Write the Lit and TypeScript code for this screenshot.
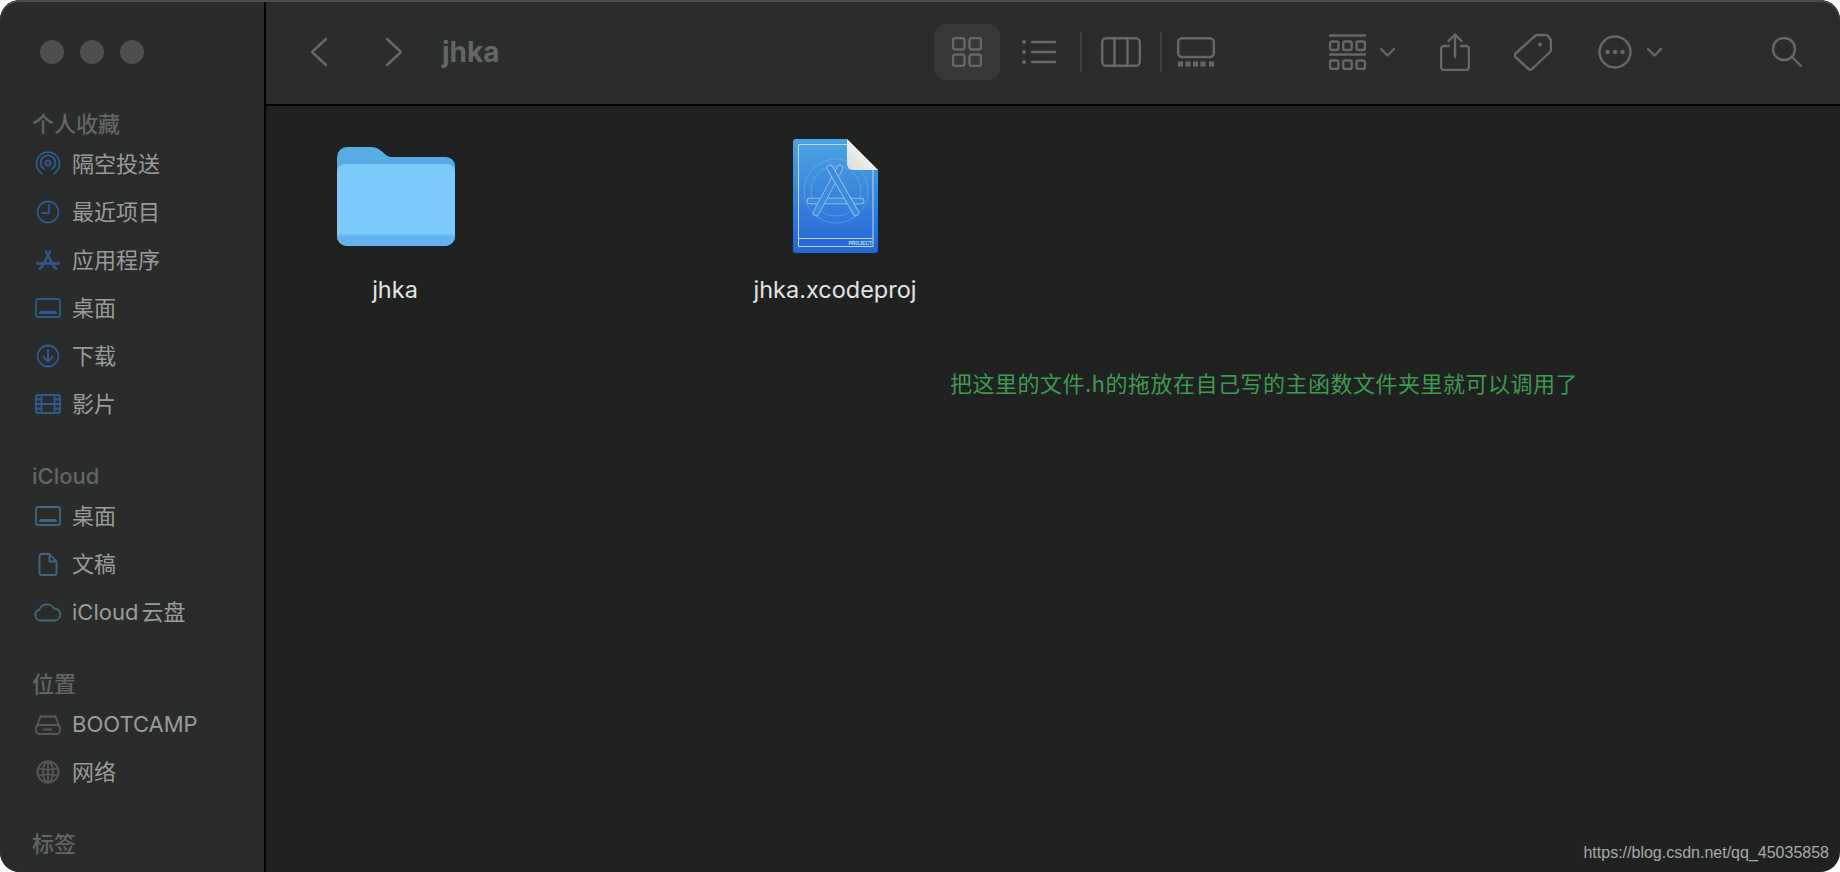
import { LitElement, html, css, svg } from "lit";
import { customElement } from "lit/decorators.js";

const blue = "#2d5a8f";
const teal = "#40687d";
const gray = "#565958";

const icons: Record<string, any> = {
  airdrop: svg`<path d="M8 23.500a11.500 11.500 0 1 1 12 0" /><path d="M10 19a7.400 7.400 0 1 1 8 0"/><circle cx="14" cy="13" r="2.600"/>`,
  clock: svg`<circle cx="14" cy="14" r="10.500"/><path d="M15 7v8H8"/>`,
  apps: svg`<path d="M12 5.500l8 15.500M16 5.500L8 21M3 17.500h22" stroke-width="2.400"/><path d="M6 23l.8-1.500M22 23l-.8-1.500" stroke-width="2.400"/>`,
  desktop: svg`<rect x="2" y="5" width="24" height="18" rx="2"/><path d="M6.500 18.500h15" stroke-width="3"/>`,
  download: svg`<circle cx="14" cy="14" r="10.500"/><path d="M14 8v11M9.500 15l4.500 4.500 4.500-4.500"/>`,
  film: svg`<rect x="2" y="5" width="24" height="18" rx="2"/><path d="M7.500 5v18M20.500 5v18M7.500 14h13M2 9.500h5.500M2 14h5.500M2 18.500h5.500M20.500 9.500H26M20.500 14H26M20.500 18.500H26"/>`,
  doc: svg`<path d="M5.500 6a2 2 0 0 1 2-2h8l7 7.500V23a2 2 0 0 1-2 2h-13a2 2 0 0 1-2-2zM15.500 4v7.500h7"/>`,
  cloud: svg`<path d="M7.500 22.500a5.500 5.500 0 0 1-1-10.800A8 8 0 0 1 21 10.500a6 6 0 0 1 .5 12z" transform="translate(-1)"/>`,
  drive: svg`<path d="M2 18l4.500-11.500h15L26 18"/><rect x="2" y="15" width="24" height="9" rx="3.500"/><path d="M10 19.500h8" stroke-dasharray="1 1" stroke-width="2"/>`,
  globe: svg`<circle cx="14" cy="14" r="10.500"/><ellipse cx="14" cy="14" rx="5" ry="10.500"/><path d="M14 3.500v21M4 10c6 2 14 2 20 0M4 18c6-2 14-2 20 0"/>`,
};

interface Row { icon: string; label: string; color: string }
interface Section { title: string; rows: Row[] }

const sections: Section[] = [
  {
    title: "个人收藏",
    rows: [
      { icon: "airdrop", label: "隔空投送", color: blue },
      { icon: "clock", label: "最近项目", color: blue },
      { icon: "apps", label: "应用程序", color: blue },
      { icon: "desktop", label: "桌面", color: blue },
      { icon: "download", label: "下载", color: blue },
      { icon: "film", label: "影片", color: blue },
    ],
  },
  {
    title: "iCloud",
    rows: [
      { icon: "desktop", label: "桌面", color: teal },
      { icon: "doc", label: "文稿", color: teal },
      { icon: "cloud", label: "iCloud 云盘", color: teal },
    ],
  },
  {
    title: "位置",
    rows: [
      { icon: "drive", label: "BOOTCAMP", color: gray },
      { icon: "globe", label: "网络", color: gray },
    ],
  },
  { title: "标签", rows: [] },
];

@customElement("app-root")
export class AppRoot extends LitElement {
  static styles = css`
    :host {
      display: block;
      width: 1840px;
      height: 872px;
      background: #fff;
      font-family: Inter, "Noto Sans CJK SC", sans-serif;
    }
    .window {
      position: relative;
      display: flex;
      width: 1840px;
      height: 872px;
      border-radius: 20px;
      overflow: hidden;
      background: #202221;
    }
    .window::after {
      content: "";
      position: absolute;
      inset: 0;
      border-radius: 20px;
      box-shadow: inset 0 2px 0 #4b4d4c;
      pointer-events: none;
    }
    .sidebar {
      flex: none;
      box-sizing: border-box;
      padding-top: 40px;
      background: #2a2c2b;
      border-right: 2px solid #000;
      width: 266px;
      overflow: hidden;
    }
    .lights {
      display: flex;
      gap: 16px;
      padding-left: 40px;
      margin-bottom: 44px;
    }
    .lights span {
      width: 24px;
      height: 24px;
      border-radius: 50%;
      background: #4e504f;
    }
    .section {
      margin-bottom: 32px;
    }
    .heading {
      height: 32px;
      line-height: 32px;
      padding-left: 32px;
      font-size: 22px;
      font-weight: 500;
      color: #636564;
      white-space: nowrap;
    }
    .row {
      display: flex;
      align-items: center;
      height: 48px;
      padding-left: 34px;
      gap: 10px;
      font-size: 22px;
      line-height: 32px;
      word-spacing: -3px;
      color: #9a9b9b;
      white-space: nowrap;
    }
    .row svg {
      width: 28px;
      height: 28px;
      flex: none;
      fill: none;
      stroke: currentColor;
      stroke-width: 1.8;
      stroke-linecap: round;
      stroke-linejoin: round;
    }
    .main {
      flex: 1;
      min-width: 0;
      display: flex;
      flex-direction: column;
    }
    .toolbar {
      height: 104px;
      flex: none;
      display: flex;
      align-items: center;
      background: #2b2d2c;
      border-bottom: 2px solid #000;
      color: #666867;
      padding-left: 44px;
    }
    .toolbar svg {
      display: block;
      flex: none;
      fill: none;
      stroke: currentColor;
      stroke-width: 2.4;
      stroke-linecap: round;
      stroke-linejoin: round;
    }
    .title {
      font-size: 28px;
      font-weight: 700;
      color: #646665;
      margin-left: 39px;
      width: 60px;
      line-height: 34px;
      flex: none;
    }
    .fwd { margin-left: 57px; }
    .active {
      width: 66px;
      height: 56px;
      margin-left: 432px;
      border-radius: 12px;
      background: #373938;
      display: flex;
      align-items: center;
      justify-content: center;
      flex: none;
    }
    .list { margin-left: 21px; }
    .sep {
      width: 2px;
      height: 40px;
      background: #3f4140;
      flex: none;
    }
    .sep1 { margin-left: 24px; }
    .cols { margin-left: 19px; }
    .sep2 { margin-left: 19px; }
    .gallery { margin-left: 15px; }
    .group { margin-left: 114px; }
    .chev1 { margin-left: 13px; }
    .share { margin-left: 44px; }
    .tag { margin-left: 44px; }
    .more { margin-left: 46px; }
    .chev2 { margin-left: 14px; }
    .search { margin-left: 108px; }
    .files {
      flex: 1;
      display: grid;
      grid-template-columns: 220px 220px;
      column-gap: 220px;
      align-content: start;
      padding-left: 19px;
    }
    .file {
      display: flex;
      flex-direction: column;
      align-items: center;
    }
    .thumb {
      box-sizing: border-box;
      height: 147px;
      display: flex;
      align-items: flex-end;
      justify-content: center;
      width: 100%;
      padding-left: 1px;
    }
    .folder-art {
      margin-bottom: 7px;
      margin-left: 1px;
    }
    .label {
      margin-top: 22px;
      font-size: 23.5px;
      line-height: 30px;
      color: #e4e4e4;
      white-space: nowrap;
    }
    .note {
      position: absolute;
      left: 950px;
      top: 366px;
      font-family: "Noto Sans CJK SC", sans-serif;
      font-size: 22px;
      line-height: 32px;
      letter-spacing: 0.5px;
      color: #3f9a50;
      white-space: nowrap;
    }
    .mark {
      position: absolute;
      right: 11px;
      top: 843px;
      font-family: "Liberation Sans", sans-serif;
      font-size: 16px;
      line-height: 20px;
      color: #a8a9a9;
      white-space: nowrap;
    }
  `;

  private folder() {
    return html`<svg class="folder-art" width="118" height="99" viewBox="0 0 118 99">
      <defs>
        <linearGradient id="fb" x1="0" y1="0" x2="0" y2="1">
          <stop offset="0" stop-color="#5aaee6" />
          <stop offset="1" stop-color="#4a9bd8" />
        </linearGradient>
      </defs>
      <path d="M0 10a10 10 0 0 1 10-10h24c6 0 9 3 12 5.500 3 2.500 5 4.500 9 4.500h54a9 9 0 0 1 9 9v60H0z" fill="url(#fb)" />
      <path d="M0 25a8 8 0 0 1 8-8h102a8 8 0 0 1 8 8v64a10 10 0 0 1-10 10H10A10 10 0 0 1 0 89z" fill="#7ccafc" />
      <path d="M0 87h118v2a10 10 0 0 1-10 10H10A10 10 0 0 1 0 89z" fill="#61b4ee" />
      <path d="M0 88h118" stroke="#7fc6f4" stroke-width="1" />
    </svg>`;
  }

  private project() {
    const leg = "#3d8cdc";
    const edge = "#a6c9ef";
    return html`<svg width="85" height="114" viewBox="0 0 85 114">
      <defs>
        <linearGradient id="pj" x1="0" y1="0" x2="0" y2="1">
          <stop offset="0" stop-color="#4aa5e2" />
          <stop offset="1" stop-color="#2565d6" />
        </linearGradient>
        <linearGradient id="fold" x1="0" y1="1" x2="1" y2="0">
          <stop offset="0" stop-color="#dcdcdc" />
          <stop offset="1" stop-color="#ffffff" />
        </linearGradient>
      </defs>
      <path d="M3 0h51l31 31v80a3 3 0 0 1-3 3H3a3 3 0 0 1-3-3V3a3 3 0 0 1 3-3z" fill="url(#pj)" />
      <g fill="none" stroke="#bcd6f2" stroke-width="1">
        <path d="M54 5.500H5.500V107.500H80V31" />
        <path d="M5.500 99.500H80" />
      </g>
      <g fill="none" stroke="#9cc4ec" stroke-width="0.7" opacity="0.5">
        <circle cx="43" cy="52" r="32" />
        <circle cx="43" cy="52" r="25" />
      </g>
      <g fill="none" stroke-linecap="round">
        <path d="M17 62h51" stroke="${edge}" stroke-width="6.500" />
        <path d="M17 62h51" stroke="${leg}" stroke-width="5" />
        <path d="M47 29L23 74" stroke="${edge}" stroke-width="6.500" />
        <path d="M47 29L23 74" stroke="${leg}" stroke-width="5" />
        <path d="M37 29L63 74" stroke="${edge}" stroke-width="6.500" />
        <path d="M37 29L63 74" stroke="${leg}" stroke-width="5" />
      </g>
      <path d="M54 0l31 31H60a6 6 0 0 1-6-6z" fill="url(#fold)" />
      <text x="79" y="105.500" text-anchor="end" font-family="Liberation Sans, sans-serif" font-size="5" font-weight="700" fill="#bcd6f2">PROJECT</text>
    </svg>`;
  }

  render() {
    return html`
      <div class="window">
        <aside class="sidebar">
          <div class="lights"><span></span><span></span><span></span></div>
          ${sections.map(
            (s) => html`<div class="section">
              <div class="heading">${s.title}</div>
              ${s.rows.map(
                (r) => html`<div class="row">
                  <svg viewBox="0 0 28 28" style="color:${r.color}">${icons[r.icon]}</svg>
                  <span>${r.label}</span>
                </div>`
              )}
            </div>`
          )}
        </aside>
        <main class="main">
          <div class="toolbar">
            <svg width="18" height="30" viewBox="0 0 18 30"><path d="M16 2L2 15l14 13" /></svg>
            <svg class="fwd" width="18" height="30" viewBox="0 0 18 30"><path d="M2 2l14 13L2 28" /></svg>
            <div class="title">jhka</div>
            <div class="active">
              <svg width="30" height="30" viewBox="0 0 30 30" stroke-width="2">
                <rect x="1" y="1" width="11.500" height="11.500" rx="2.500" /><rect x="17.500" y="1" width="11.500" height="11.500" rx="2.500" />
                <rect x="1" y="17.500" width="11.500" height="11.500" rx="2.500" /><rect x="17.500" y="17.500" width="11.500" height="11.500" rx="2.500" />
              </svg>
            </div>
            <svg class="list" width="35" height="24" viewBox="0 0 35 24">
              <circle cx="3" cy="2" r="2" fill="currentColor" stroke="none" /><circle cx="3" cy="12" r="2" fill="currentColor" stroke="none" /><circle cx="3" cy="22" r="2" fill="currentColor" stroke="none" />
              <path d="M11 2h23M11 12h23M11 22h23" />
            </svg>
            <div class="sep sep1"></div>
            <svg class="cols" width="40" height="30" viewBox="0 0 40 30">
              <rect x="1.200" y="1.200" width="37.600" height="27.600" rx="4" /><path d="M13.500 1.200v27.600M26.500 1.200v27.600" />
            </svg>
            <div class="sep sep2"></div>
            <svg class="gallery" width="38" height="30" viewBox="0 0 38 30">
              <rect x="1.200" y="1.200" width="35.600" height="18.800" rx="4" />
              <g fill="currentColor" stroke="none">
                <rect x="1" y="24.500" width="5" height="5" /><rect x="8.500" y="24.500" width="5" height="5" /><rect x="16" y="24.500" width="5" height="5" /><rect x="23.500" y="24.500" width="5" height="5" /><rect x="32" y="24.500" width="5" height="5" />
              </g>
            </svg>
            <svg class="group" width="37" height="36" viewBox="0 0 37 36" stroke-width="2">
              <path d="M1 1.500h35M1 20.500h35" />
              <rect x="1" y="7.500" width="8.500" height="8.500" rx="2" /><rect x="14.200" y="7.500" width="8.500" height="8.500" rx="2" /><rect x="27.500" y="7.500" width="8.500" height="8.500" rx="2" />
              <rect x="1" y="26.500" width="8.500" height="8.500" rx="2" /><rect x="14.200" y="26.500" width="8.500" height="8.500" rx="2" /><rect x="27.500" y="26.500" width="8.500" height="8.500" rx="2" />
            </svg>
            <svg class="chev1" width="17" height="11" viewBox="0 0 17 11" stroke-width="3"><path d="M2 2l6.500 6.500L15 2" /></svg>
            <svg class="share" width="30" height="38" viewBox="0 0 30 38" stroke-width="2.200">
              <path d="M9 13H4a3 3 0 0 0-3 3v18a3 3 0 0 0 3 3h22a3 3 0 0 0 3-3V16a3 3 0 0 0-3-3h-5" />
              <path d="M15 24V1.500M8.500 8L15 1.500 21.500 8" />
            </svg>
            <svg class="tag" width="38" height="38" viewBox="0 0 38 38" stroke-width="2.200">
              <path d="M21 3a3 3 0 0 1 2-1h9a4 4 0 0 1 2 1l2 3a3 3 0 0 1 1 2v9a3 3 0 0 1-1 2L18 36a2.500 2.500 0 0 1-3.500 0L1.500 24a2.500 2.500 0 0 1 0-3.500z" />
              <circle cx="26" cy="11.500" r="2" fill="currentColor" stroke="none" />
            </svg>
            <svg class="more" width="34" height="34" viewBox="0 0 34 34" stroke-width="2.400">
              <circle cx="17" cy="17" r="15.500" />
              <g fill="currentColor" stroke="none"><circle cx="9.500" cy="17" r="2.200" /><circle cx="17" cy="17" r="2.200" /><circle cx="24.500" cy="17" r="2.200" /></g>
            </svg>
            <svg class="chev2" width="17" height="11" viewBox="0 0 17 11" stroke-width="3"><path d="M2 2l6.500 6.500L15 2" /></svg>
            <svg class="search" width="32" height="32" viewBox="0 0 32 32" stroke-width="3">
              <circle cx="13" cy="13" r="11" /><path d="M21 21l9 9" />
            </svg>
          </div>
          <div class="files">
            <div class="file">
              <div class="thumb">${this.folder()}</div>
              <div class="label">jhka</div>
            </div>
            <div class="file">
              <div class="thumb">${this.project()}</div>
              <div class="label">jhka.xcodeproj</div>
            </div>
          </div>
        </main>
        <div class="note">把这里的文件.h的拖放在自己写的主函数文件夹里就可以调用了</div>
        <div class="mark">https://blog.csdn.net/qq_45035858</div>
      </div>
    `;
  }
}
